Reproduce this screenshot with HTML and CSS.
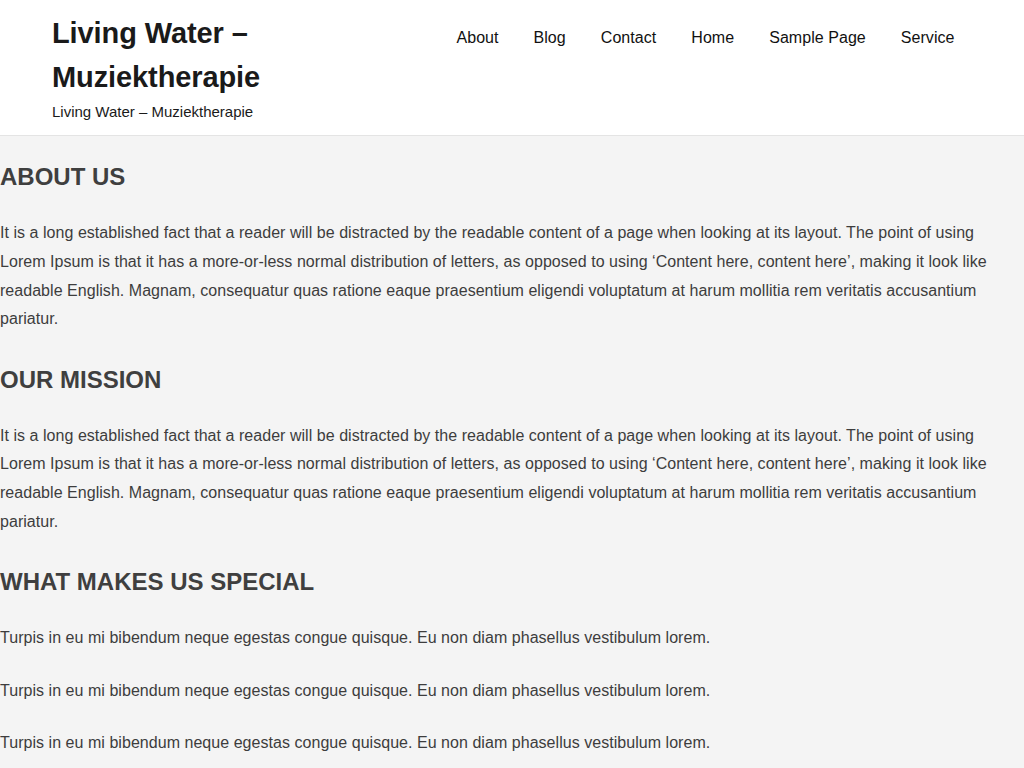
FILE: index.html
```html
<!DOCTYPE html>
<html lang="nl">
<head>
<meta charset="utf-8">
<title>Living Water – Muziektherapie</title>
<link rel="stylesheet" href="styles.css">
</head>
<body>
<header class="site-header">
  <div class="header-inner">
    <div class="branding">
      <h1 class="site-title">Living Water –<br>Muziektherapie</h1>
      <p class="site-tagline">Living Water – Muziektherapie</p>
    </div>
    <nav class="main-nav">
      <a href="#">About</a>
      <a href="#">Blog</a>
      <a href="#">Contact</a>
      <a href="#">Home</a>
      <a href="#">Sample Page</a>
      <a href="#">Service</a>
    </nav>
  </div>
</header>
<main class="content">
  <h2 class="section-title">ABOUT US</h2>
  <p class="text">It is a long established fact that a reader will be distracted by the readable content of a page when looking at its layout. The point of using Lorem Ipsum is that it has a more-or-less normal distribution of letters, as opposed to using ‘Content here, content here’, making it look like readable English. Magnam, consequatur quas ratione eaque praesentium eligendi voluptatum at harum mollitia rem veritatis accusantium pariatur.</p>
  <h2 class="section-title">OUR MISSION</h2>
  <p class="text">It is a long established fact that a reader will be distracted by the readable content of a page when looking at its layout. The point of using Lorem Ipsum is that it has a more-or-less normal distribution of letters, as opposed to using ‘Content here, content here’, making it look like readable English. Magnam, consequatur quas ratione eaque praesentium eligendi voluptatum at harum mollitia rem veritatis accusantium pariatur.</p>
  <h2 class="section-title">WHAT MAKES US SPECIAL</h2>
  <p class="text">Turpis in eu mi bibendum neque egestas congue quisque. Eu non diam phasellus vestibulum lorem.</p>
  <p class="text">Turpis in eu mi bibendum neque egestas congue quisque. Eu non diam phasellus vestibulum lorem.</p>
  <p class="text">Turpis in eu mi bibendum neque egestas congue quisque. Eu non diam phasellus vestibulum lorem.</p>
</main>
</body>
</html>
```

FILE: styles.css
```css
* { box-sizing: border-box; }
html, body {
  margin: 0;
  padding: 0;
}
body {
  background: #f4f4f4;
  font-family: "Liberation Sans", Arial, Helvetica, sans-serif;
  color: #3d3d3d;
}
.site-header {
  background: #ffffff;
  border-bottom: 1px solid #e4e4e4;
  height: 136px;
}
.header-inner {
  width: 920px;
  margin: 0 auto;
  display: flex;
  justify-content: space-between;
  align-items: flex-start;
  padding-top: 11px;
}
.site-title {
  margin: 0;
  font-size: 29px;
  line-height: 44px;
  font-weight: 700;
  color: #1a1a1a;
  letter-spacing: -0.1px;
}
.site-tagline {
  margin: 2px 0 0;
  font-size: 15px;
  line-height: 22px;
  color: #1a1a1a;
}
.main-nav {
  display: flex;
  padding-top: 16px;
}
.main-nav a {
  color: #111111;
  text-decoration: none;
  font-size: 16px;
  line-height: 22px;
  letter-spacing: 0.05px;
  padding: 0 17.5px;
}
.content {
  padding: 0;
  max-width: 1002px;
}
.section-title {
  margin: 19px 0 21px;
  font-size: 24px;
  line-height: 43px;
  font-weight: 700;
  color: #3f3f3f;
}
.text {
  margin: 0 0 23.5px;
  font-size: 16px;
  line-height: 28.8px;
  letter-spacing: 0.04px;
  color: #3d3d3d;
}
```
